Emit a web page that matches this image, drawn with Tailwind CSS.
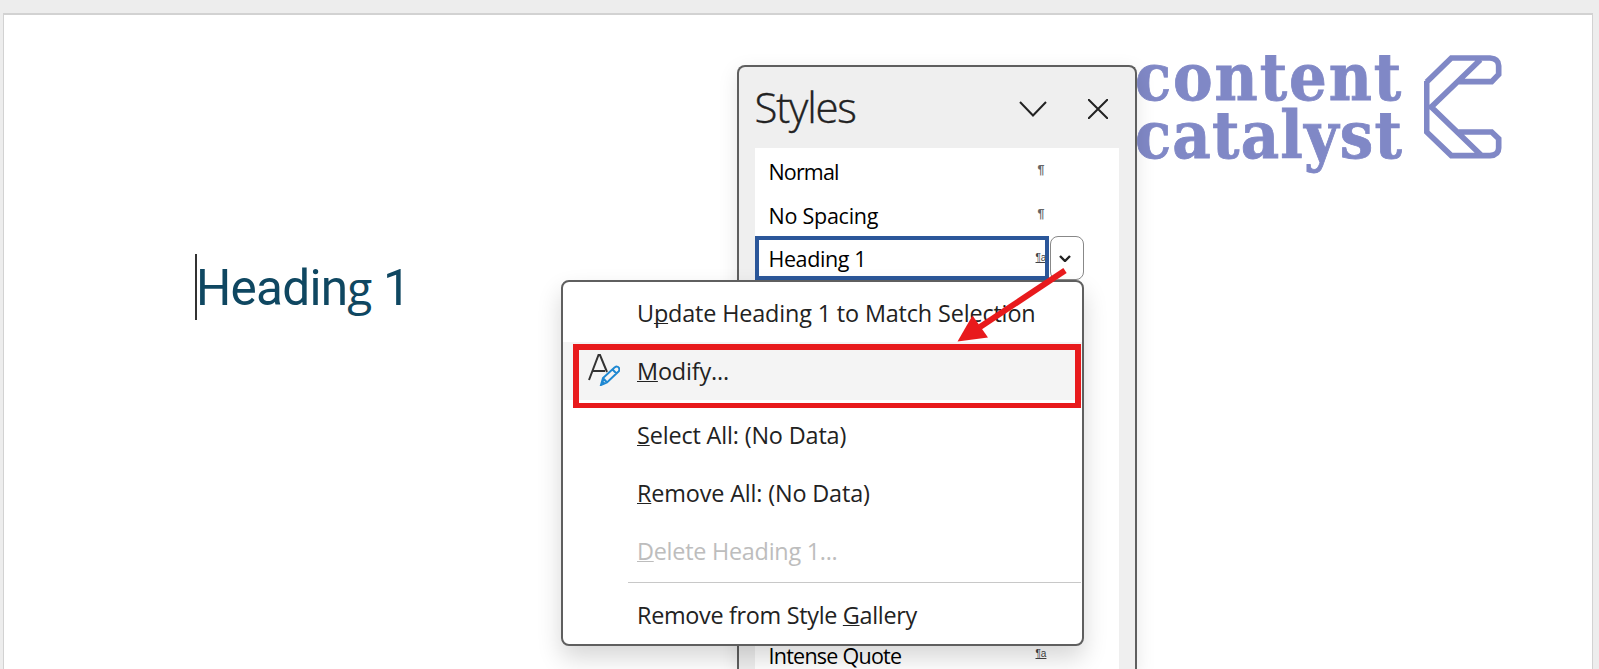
<!DOCTYPE html>
<html lang="en">
<head>
<meta charset="utf-8">
<title>Styles pane</title>
<script src="https://cdn.jsdelivr.net/npm/@tailwindcss/browser@4"></script>
</head>
<body class="relative h-[669px] w-[1599px] overflow-hidden bg-[#ededed] pt-[13px] pl-[3px] font-['Open_Sans',sans-serif]">
  <!-- Document page -->
  <main class="flex h-[656px] w-[1590px] justify-between border-x border-t-2 border-[#d2d2d2] bg-white">
    <div class="flex h-[66px] mt-[239px] ml-[191px]">
      <span class="h-[66px] w-[2px] bg-black/80"></span>
      <h1 class="mt-px ml-[-1px] whitespace-nowrap font-['Roboto',sans-serif] text-[49.5px] leading-[66px] tracking-[-0.75px] text-[#0f4761]">Headin<span class="font-['Open_Sans',sans-serif] text-[46px] leading-none">g</span> 1</h1>
    </div>
    <div class="mt-[40px] mr-[90px] flex h-[130px] text-[#8088c6]">
      <div class="mt-[-6px] w-[289px] whitespace-nowrap font-['DejaVu_Serif_Condensed','DejaVu_Serif',serif] text-[66px] leading-[57.7px] font-bold [-webkit-text-stroke:0.8px_#8088c6]">
        <div class="tracking-[1.9px]">content</div>
        <div class="tracking-[1.200px]">catalyst</div>
      </div>
      <svg class="h-[104px] w-[78px]" viewBox="914 46 234 312" fill="none" stroke="currentColor" stroke-width="17">
        <path d="M922 127L996 55H1112Q1138 57 1138 78V104L1117 126H1018M1083 60L936 202L1085 346M922 124V277L996 348H1112Q1138 346 1138 325V297L1117 277H1018"/>
      </svg>
    </div>
  </main>

  <!-- Styles pane -->
  <aside class="absolute top-[65px] left-[736.5px] flex h-[604px] w-[400px] flex-col rounded-t-lg border-2 border-b-0 border-[#5f5f5f] bg-[#efefef] px-4 shadow-[0_6px_20px_rgba(0,0,0,0.1)]">
    <header class="flex h-[81px] shrink-0 items-center">
      <h2 class="mt-[-2px] grow text-[42px] leading-[79px] font-light tracking-[-1.200px] text-[#222] [-webkit-text-stroke:0.4px_#222]">Styles</h2>
      <svg class="mt-[2px] mr-[41px] h-4 w-7" viewBox="0 0 28 16" fill="none" stroke="#222" stroke-width="2"><path d="M1 1L14 14.5L27 1"/></svg>
      <svg class="mt-[2px] mr-[11px] h-5 w-5" viewBox="0 0 20 20" fill="none" stroke="#222" stroke-width="2"><path d="M0 0L20 20M20 0L0 20"/></svg>
    </header>
    <div class="grow bg-white text-[21.5px] text-black">
      <div class="flex h-11 items-center pt-[4px] pl-[14px]"><span class="w-[269px] tracking-[-0.85px]">Normal</span><span class="mb-1 font-['Liberation_Sans',sans-serif] text-[12.5px] font-bold text-[#666]">¶</span></div>
      <div class="flex h-11 items-center pt-[4px] pl-[14px]"><span class="w-[269px] tracking-[-0.25px]">No Spacing</span><span class="mb-1 font-['Liberation_Sans',sans-serif] text-[12.5px] font-bold text-[#666]">¶</span></div>
      <div class="flex h-11 items-stretch gap-px">
        <div class="flex w-[294px] items-center overflow-hidden border-4 border-[#2b579a] pt-[3px] pl-[10px]"><span class="w-[267px] shrink-0 tracking-[-0.4px]">Heading 1</span><span class="mb-1 font-['Liberation_Sans',sans-serif] text-[10px] text-[#444] underline [text-decoration-skip-ink:none]">¶a</span></div>
        <div class="flex w-[34px] items-center justify-center rounded-lg border border-[#888] pr-[3px]">
          <svg class="h-[7px] w-3" viewBox="0 0 12 7" fill="none" stroke="#222" stroke-width="2.4"><path d="M1 1L6 6L11 1"/></svg>
        </div>
      </div>
      <div class="mt-[363px] flex h-[26px] items-center pl-[14px] leading-[26px]"><span class="w-[267px] tracking-[-0.75px]">Intense Quote</span><span class="mb-1 font-['Liberation_Sans',sans-serif] text-[10px] leading-none text-[#444] underline [text-decoration-skip-ink:none]">¶a</span></div>
    </div>
  </aside>

  <!-- Context menu -->
  <div class="absolute top-[280px] left-[561px] h-[366px] w-[523px] rounded-lg border-2 border-[#5f5f5f] bg-white pt-[2px] text-[23.4px] leading-[58px] tracking-[-0.15px] whitespace-nowrap text-[#222] shadow-[0_12px_24px_rgba(0,0,0,0.16)]">
    <div class="h-[58px] pl-[74px]">U<u class="decoration-1 underline-offset-1 [text-decoration-skip-ink:none]">p</u>date Heading 1 to Match Selection</div>
    <div class="flex h-[58px] items-center bg-[#f4f4f4] pl-[25px]">
      <svg class="mr-[17px] mb-[3px] h-8 w-8" viewBox="0 0 32 32" fill="none">
        <path d="M1 26L10.500 1H12L19 18M5 17H17" stroke="#333" stroke-width="2"/>
        <path d="M13 31L15 24L26.500 13.500Q29.500 11.500 31 14Q32 16 30.500 17.500L19 28.500ZM15 24L19 28.500M24.500 15.500L28.500 19.500" stroke="#1e88d2" stroke-width="2"/>
        <path d="M13 31L14.500 26L17.500 29.500Z" fill="#1e88d2"/>
      </svg>
      <span><u class="decoration-1 underline-offset-1">M</u>odify...</span>
    </div>
    <div class="mt-[6px] h-[58px] pl-[74px]"><u class="decoration-1 underline-offset-1">S</u>elect All: (No Data)</div>
    <div class="h-[58px] pl-[74px]"><u class="decoration-1 underline-offset-1">R</u>emove All: (No Data)</div>
    <div class="h-[58px] pl-[74px] tracking-[-0.25px] text-[#bdbdbd]"><u class="decoration-1 underline-offset-1">D</u>elete Heading 1...</div>
    <div class="mt-[2px] mr-[1px] ml-[65px] h-px bg-[#c8c8c8]"></div>
    <div class="mt-[3px] h-[56px] pl-[74px] tracking-[-0.31px]">Remove from Style <u class="decoration-1 underline-offset-1">G</u>allery</div>
  </div>

  <!-- Callout -->
  <div class="absolute top-[344px] left-[573px] flex h-[63.5px] w-[508px] flex-col justify-end border-[6px] border-b-5 border-[#e81a1c]"><span class="h-px bg-white"></span></div>
  <svg class="absolute top-[260px] left-[950px] h-[90px] w-[130px]" viewBox="950 260 130 90">
    <path d="M1065 270.500L980 327" stroke="#e81a1c" stroke-width="6"/>
    <path d="M957.500 341.500L972.500 315.500L988 337.500Z" fill="#e81a1c"/>
  </svg>
</body>
</html>
